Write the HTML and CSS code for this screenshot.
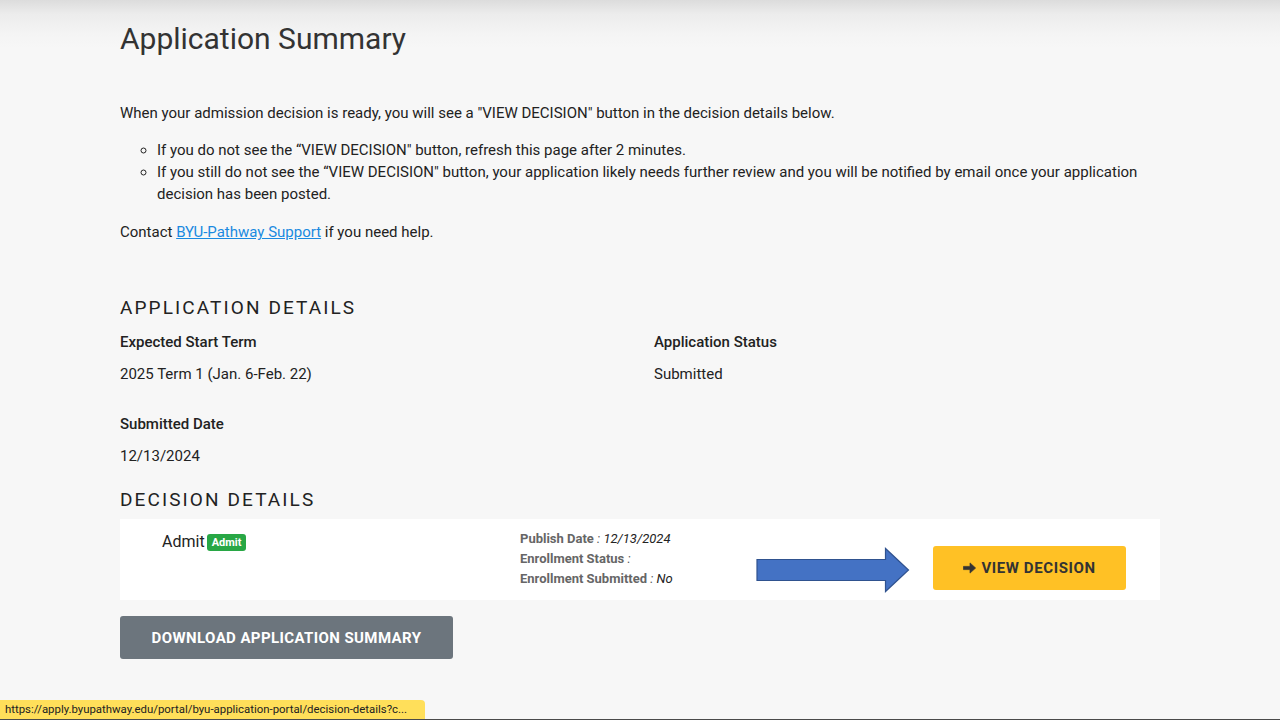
FILE: index.html
```html
<!DOCTYPE html>
<html lang="en">
<head>
<meta charset="utf-8">
<title>Application Summary</title>
<link rel="stylesheet" href="styles.css">
</head>
<body>
<div class="page">
  <main class="container">
    <h1 class="title">Application Summary</h1>
    <p class="intro">When your admission decision is ready, you will see a "VIEW DECISION" button in the decision details below.</p>
    <ul class="notes">
      <li>If you do not see the “VIEW DECISION" button, refresh this page after 2 minutes.</li>
      <li>If you still do not see the “VIEW DECISION" button, your application likely needs further review and you will be notified by email once your application decision has been posted.</li>
    </ul>
    <p class="contact">Contact <a href="#" class="link">BYU-Pathway Support</a> if you need help.</p>

    <h2 class="section-title app-title">APPLICATION DETAILS</h2>
    <div class="details">
      <div class="field">
        <div class="label">Expected Start Term</div>
        <div class="value">2025 Term 1 (Jan. 6-Feb. 22)</div>
      </div>
      <div class="field">
        <div class="label">Application Status</div>
        <div class="value">Submitted</div>
      </div>
      <div class="field">
        <div class="label">Submitted Date</div>
        <div class="value">12/13/2024</div>
      </div>
    </div>

    <h2 class="section-title dec-title">DECISION DETAILS</h2>
    <div class="decision-card">
      <div class="decision-name">Admit<span class="badge">Admit</span></div>
      <div class="decision-meta">
        <div><span class="meta-label">Publish Date</span><span class="meta-colon"> : </span><span class="meta-value">12/13/2024</span></div>
        <div><span class="meta-label">Enrollment Status</span><span class="meta-colon"> : </span></div>
        <div><span class="meta-label">Enrollment Submitted</span><span class="meta-colon"> : </span><span class="meta-value">No</span></div>
      </div>
      <div class="decision-action">
        <svg class="big-arrow" width="154" height="46" viewBox="0 0 154 46">
          <path d="M1 12.5 H129.5 V1.5 L152.5 23 L129.5 44.5 V33.5 H1 Z" fill="#4472c4" stroke="#2f528f" stroke-width="1.2"/>
        </svg>
        <button class="btn-view"><svg class="btn-arrow" width="13" height="12" viewBox="0 0 13 12"><path d="M0.5 4.4 H7 V0.9 L12.6 6 L7 11.1 V7.6 H0.5 Z" fill="#333" stroke="#333" stroke-width="0.7" stroke-linejoin="round"/></svg>VIEW DECISION</button>
      </div>
    </div>

    <button class="btn-download">DOWNLOAD APPLICATION SUMMARY</button>
  </main>
  <div class="statusbar"><span class="status-url">https://apply.byupathway.edu/portal/byu-application-portal/decision-details?c...</span></div>
</div>
</body>
</html>
```

FILE: styles.css
```css
html, body {
  margin: 0;
  padding: 0;
}
body {
  width: 1280px;
  height: 720px;
  overflow: hidden;
  background: #f7f7f7 linear-gradient(#dcdcdc 0, #ececec 14px, #f4f4f4 34px, #f7f7f7 48px) no-repeat;
  background-size: 100% 60px;
  font-family: Roboto, "Liberation Sans", sans-serif;
  color: #222;
}
.page {
  position: relative;
  height: 720px;
  display: flex;
  flex-direction: column;
  border-bottom: 1px solid #4a4a4a;
  box-sizing: border-box;
}
.container {
  width: 1040px;
  margin: 0 auto;
  flex: 1;
}
.title {
  margin: 19px 0 0;
  font-size: 30px;
  line-height: 40px;
  font-weight: 400;
  color: #333;
}
.intro {
  margin: 43px 0 0;
  font-size: 15px;
  line-height: 22px;
}
.notes {
  margin: 15px 0 0;
  padding-left: 37px;
  list-style: circle;
  font-size: 15px;
  line-height: 22px;
}
.contact {
  margin: 16px 0 0;
  font-size: 15px;
  line-height: 22px;
}
.link {
  color: #1a8ae0;
  text-decoration: underline;
}
.section-title {
  margin: 0;
  font-size: 19px;
  line-height: 24px;
  font-weight: 400;
  letter-spacing: 2.1px;
  color: #222;
}
.app-title {
  margin-top: 53px;
}
.details {
  display: grid;
  grid-template-columns: 534px 1fr;
  row-gap: 28px;
  margin-top: 11px;
}
.label {
  font-size: 15px;
  line-height: 22px;
  font-weight: 500;
  color: #222;
}
.value {
  margin-top: 10px;
  font-size: 15px;
  line-height: 22px;
  color: #222;
}
.dec-title {
  margin-top: 21px;
}
.decision-card {
  margin-top: 7px;
  background: #fff;
  height: 81px;
  display: flex;
  align-items: flex-start;
  box-sizing: border-box;
}
.decision-name {
  width: 400px;
  padding: 13px 0 0 42px;
  box-sizing: border-box;
  font-size: 16px;
  line-height: 20px;
  color: #222;
}
.badge {
  display: inline-block;
  margin-left: 2px;
  vertical-align: 1px;
  background: #28a745;
  color: #fff;
  font-size: 11px;
  font-weight: 700;
  line-height: 17px;
  padding: 0 5px;
  border-radius: 3px;
}
.decision-meta {
  width: 236px;
  padding-top: 10px;
  font-size: 13px;
  line-height: 20px;
}
.meta-label {
  font-weight: 700;
  color: #666;
}
.meta-colon {
  color: #555;
  font-style: italic;
}
.meta-value {
  font-style: italic;
  color: #222;
}
.decision-action {
  display: flex;
  align-items: center;
  padding-top: 26px;
}
.big-arrow {
  display: block;
  margin-top: 2px;
}
.btn-view {
  margin-left: 23px;
  margin-top: -2px;
  width: 193px;
  height: 44px;
  border: 0;
  border-radius: 3px;
  background: #ffc125;
  color: #333;
  font-family: Roboto, "Liberation Sans", sans-serif;
  font-size: 15px;
  font-weight: 700;
  letter-spacing: 0.6px;
  display: flex;
  align-items: center;
  justify-content: center;
  gap: 5px;
  padding: 0;
}
.btn-arrow {
  display: block;
}
.btn-download {
  display: block;
  margin-top: 16px;
  width: 333px;
  height: 43px;
  border: 0;
  border-radius: 3px;
  background: #6c757d;
  color: #fff;
  font-family: Roboto, "Liberation Sans", sans-serif;
  font-size: 15px;
  font-weight: 700;
  letter-spacing: 0.4px;
  padding: 0;
}
.statusbar {
  position: absolute;
  left: 0;
  bottom: 0;
  width: 425px;
  height: 19px;
  background: #ffdf5a;
  border-top-right-radius: 4px;
  overflow: hidden;
  white-space: nowrap;
}
.status-url {
  display: block;
  padding-left: 5px;
  font-family: Roboto, "Liberation Sans", sans-serif;
  font-size: 11.4px;
  line-height: 19px;
  color: #222;
}
```
